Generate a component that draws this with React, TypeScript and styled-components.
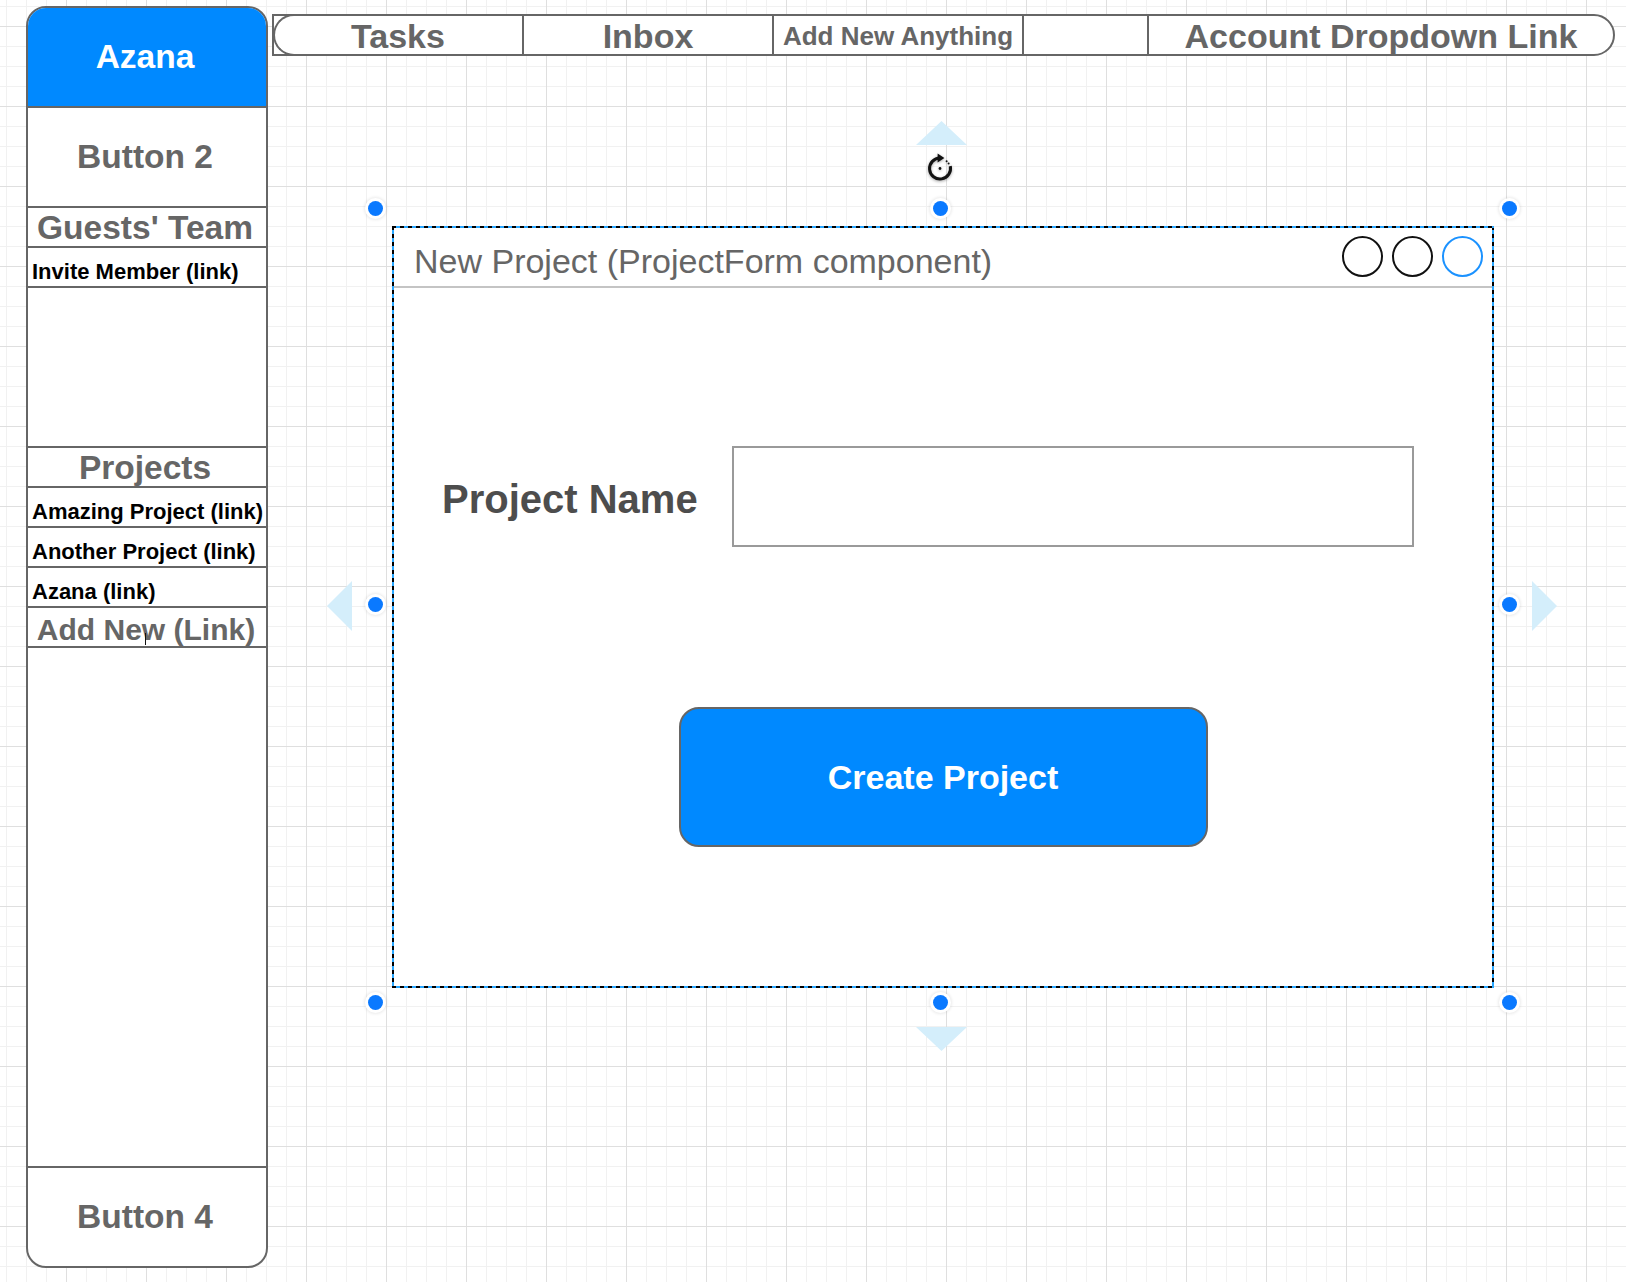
import React from 'react';
import styled, { createGlobalStyle, css } from 'styled-components';

const GlobalStyle = createGlobalStyle`
  html, body {
    margin: 0;
    padding: 0;
  }
  body {
    font-family: "Liberation Sans", Arial, Helvetica, sans-serif;
    background: #fff;
    overflow: hidden;
  }
  *, *::before, *::after {
    box-sizing: border-box;
  }
`;

const Canvas = styled.main`
  width: 1626px;
  height: 1282px;
  display: flex;
  align-items: flex-start;
  padding: 6px 0 0 26px;
  background-color: #fff;
  background-image:
    linear-gradient(to right, #dfdfdf 1px, transparent 1px),
    linear-gradient(to bottom, #dfdfdf 1px, transparent 1px),
    linear-gradient(to right, #f1f1f1 1px, transparent 1px),
    linear-gradient(to bottom, #f1f1f1 1px, transparent 1px);
  background-size: 80px 80px, 80px 80px, 20px 20px, 20px 20px;
  background-position: 66px 26px, 66px 26px, 6px 6px, 6px 6px;
`;

/* ---------- Sidebar ---------- */

const Sidebar = styled.aside`
  flex: 0 0 auto;
  width: 242px;
  height: 1262px;
  border: 2px solid #666;
  border-radius: 20px;
  overflow: hidden;
  background: #fff;
  display: flex;
  flex-direction: column;
`;

const SideCell = styled.div<{ $h: number }>`
  position: relative;
  flex: 0 0 auto;
  height: ${(p) => p.$h}px;
  border-bottom: 2px solid #666;
  white-space: nowrap;
  &:last-child {
    border-bottom: none;
  }
`;

const Brand = styled(SideCell)`
  display: flex;
  align-items: center;
  justify-content: center;
  padding-right: 4px;
  background: #0089ff;
  color: #fff;
  font-weight: 700;
  font-size: 33.5px;
  line-height: 1;
`;

const SideButton = styled(SideCell)`
  display: flex;
  align-items: center;
  justify-content: center;
  padding-right: 4px;
  color: #666;
  font-weight: 700;
  font-size: 33.5px;
  line-height: 1;
`;

const SectionTitle = styled(SideCell)`
  padding: 3px 4px 0 0;
  text-align: center;
  color: #666;
  font-weight: 700;
  font-size: 33.5px;
  line-height: 33.5px;
`;

const SideLink = styled(SideCell)`
  padding: 13px 0 0 4px;
  color: #000;
  font-weight: 700;
  font-size: 22px;
  line-height: 22px;
`;

const AddLink = styled(SideCell)`
  padding: 7px 2px 0 0;
  text-align: center;
  color: #666;
  font-weight: 700;
  font-size: 30px;
  line-height: 30px;
`;

const TextCursor = styled.span`
  position: absolute;
  left: 117px;
  top: 25px;
  width: 1px;
  height: 12px;
  background: #111;
`;

/* ---------- Workspace ---------- */

const Workspace = styled.div`
  display: flex;
  flex-direction: column;
  margin-left: 4px;
  padding-top: 8px;
`;

const NavBar = styled.nav`
  display: grid;
  grid-template-columns: 250px 250px 250px 125px 464px;
  width: 1343px;
  height: 42px;
  border: 2px solid #666;
  border-radius: 0 21px 21px 0;
  background: #fff;
`;

const NavItem = styled.div<{ $size?: number; $cap?: boolean }>`
  position: relative;
  display: flex;
  align-items: center;
  justify-content: center;
  padding-top: 2px;
  border-right: 2px solid #666;
  color: #666;
  font-weight: 700;
  font-size: ${(p) => p.$size ?? 34}px;
  line-height: 1;
  white-space: nowrap;
  &:last-child {
    border-right: none;
  }
  ${(p) =>
    p.$cap &&
    css`
      &::before {
        content: '';
        position: absolute;
        left: -1px;
        top: -2px;
        bottom: -2px;
        width: 42px;
        border: 2px solid #666;
        border-right: none;
        border-radius: 21px 0 0 21px;
      }
    `}
`;

const Stage = styled.div`
  margin: 170px 0 0 120px;
`;

/* ---------- Selected window ---------- */

const dash = (deg: number) =>
  `repeating-linear-gradient(${deg}deg, #000 0 4px, #2aa7ff 4px 8px)`;

const Frame = styled.section`
  position: relative;
  width: 1102px;
  height: 762px;
  background: #fff;
  display: flex;
  flex-direction: column;
  &::after {
    content: '';
    position: absolute;
    inset: 0;
    pointer-events: none;
    background:
      ${dash(90)} top left / 100% 2px no-repeat,
      ${dash(90)} bottom left / 100% 2px no-repeat,
      ${dash(180)} top left / 2px 100% no-repeat,
      ${dash(180)} top right / 2px 100% no-repeat;
  }
`;

const TitleBar = styled.header`
  flex: 0 0 auto;
  height: 62px;
  display: flex;
  align-items: center;
  padding: 0 11px 0 22px;
  border-bottom: 2px solid #c4c4c4;
`;

const Title = styled.h1`
  flex: 1;
  margin: 9px 0 0;
  color: #666;
  font-weight: 400;
  font-size: 34px;
  line-height: 1;
  white-space: nowrap;
`;

const Controls = styled.div`
  display: flex;
  gap: 9px;
  margin-top: 1px;
`;

const ControlDot = styled.span<{ $accent?: boolean }>`
  width: 41px;
  height: 41px;
  border-radius: 50%;
  border: 2px solid ${(p) => (p.$accent ? '#1b92ff' : '#111')};
`;

const Body = styled.div`
  flex: 1;
  display: flex;
  flex-direction: column;
  padding-top: 158px;
`;

const FieldRow = styled.div`
  display: flex;
  align-items: center;
  padding-left: 50px;
`;

const FieldLabel = styled.label`
  width: 290px;
  margin-top: 4px;
  color: #4d4d4d;
  font-weight: 700;
  font-size: 40px;
  line-height: 1;
  white-space: nowrap;
`;

const TextInput = styled.input`
  width: 682px;
  height: 101px;
  border: 2px solid #9a9a9a;
  border-radius: 0;
  background: #fff;
  outline: none;
  padding: 0 16px;
  font-family: inherit;
  font-size: 30px;
`;

const CreateButton = styled.button`
  align-self: center;
  margin-top: 160px;
  width: 529px;
  height: 140px;
  border: 2px solid #666;
  border-radius: 20px;
  background: #0089ff;
  color: #fff;
  font-family: inherit;
  font-weight: 700;
  font-size: 34px;
  line-height: 1;
  cursor: pointer;
`;

/* ---------- Selection overlays ---------- */

type HX = 'l' | 'c' | 'r';
type HY = 't' | 'm' | 'b';

const Handle = styled.span<{ $x: HX; $y: HY }>`
  position: absolute;
  width: 15px;
  height: 15px;
  border-radius: 50%;
  background: #0a79ff;
  box-shadow: 0 0 0 3px #fff, 0 0 3px 4px rgba(0, 0, 0, 0.08);
  ${(p) =>
    p.$x === 'l' ? 'left: -24px;' : p.$x === 'r' ? 'right: -23px;' : 'left: calc(50% - 10px);'}
  ${(p) =>
    p.$y === 't' ? 'top: -25px;' : p.$y === 'b' ? 'bottom: -22px;' : 'top: calc(50% - 10px);'}
`;

type Dir = 'up' | 'down' | 'left' | 'right';

const arrowPlace: Record<Dir, ReturnType<typeof css>> = {
  up: css`
    left: 524px;
    top: -105px;
    width: 51px;
    height: 24px;
    clip-path: polygon(50% 0, 100% 100%, 0 100%);
  `,
  down: css`
    left: 524px;
    top: 801px;
    width: 51px;
    height: 24px;
    clip-path: polygon(0 0, 100% 0, 50% 100%);
  `,
  left: css`
    left: -65px;
    top: 355px;
    width: 25px;
    height: 50px;
    clip-path: polygon(0 50%, 100% 0, 100% 100%);
  `,
  right: css`
    left: 1140px;
    top: 355px;
    width: 25px;
    height: 50px;
    clip-path: polygon(0 0, 100% 50%, 0 100%);
  `,
};

const Arrow = styled.span<{ $dir: Dir }>`
  position: absolute;
  background: #d4eefb;
  ${(p) => arrowPlace[p.$dir]}
`;

const RotateHandle = styled.span`
  position: absolute;
  left: 533px;
  top: -73px;
  width: 30px;
  height: 30px;
  filter: drop-shadow(0 1px 1.5px rgba(0, 0, 0, 0.35));
  svg {
    display: block;
  }
`;

const RotateIcon = () => (
  <svg width="30" height="30" viewBox="0 0 30 30">
    <path
      d="M15 5 A10.5 10.5 0 1 0 25.3 13.2"
      fill="none"
      stroke="#111"
      strokeWidth="3"
    />
    <path d="M12.6 0.6 L19.4 5 L12.6 9.4 Z" fill="#111" />
    <circle cx="15" cy="15.5" r="1.4" fill="#111" />
    <circle cx="21.6" cy="8.2" r="1" fill="#111" />
    <circle cx="23.6" cy="10.6" r="1" fill="#111" />
  </svg>
);

const handles: Array<[HX, HY]> = [
  ['l', 't'],
  ['c', 't'],
  ['r', 't'],
  ['l', 'm'],
  ['r', 'm'],
  ['l', 'b'],
  ['c', 'b'],
  ['r', 'b'],
];

export default function App() {
  return (
    <>
      <GlobalStyle />
      <Canvas>
        <Sidebar>
          <Brand $h={100}>Azana</Brand>
          <SideButton $h={100}>Button 2</SideButton>
          <SectionTitle $h={40}>Guests' Team</SectionTitle>
          <SideLink $h={40}>Invite Member (link)</SideLink>
          <SideCell $h={160} />
          <SectionTitle $h={40}>Projects</SectionTitle>
          <SideLink $h={40}>Amazing Project (link)</SideLink>
          <SideLink $h={40}>Another Project (link)</SideLink>
          <SideLink $h={40}>Azana (link)</SideLink>
          <AddLink $h={40}>
            Add New (Link)
            <TextCursor />
          </AddLink>
          <SideCell $h={520} />
          <SideButton $h={98}>Button 4</SideButton>
        </Sidebar>

        <Workspace>
          <NavBar>
            <NavItem $cap>Tasks</NavItem>
            <NavItem>Inbox</NavItem>
            <NavItem $size={26}>Add New Anything</NavItem>
            <NavItem />
            <NavItem>Account Dropdown Link</NavItem>
          </NavBar>

          <Stage>
            <Frame>
              <TitleBar>
                <Title>New Project (ProjectForm component)</Title>
                <Controls>
                  <ControlDot />
                  <ControlDot />
                  <ControlDot $accent />
                </Controls>
              </TitleBar>
              <Body>
                <FieldRow>
                  <FieldLabel htmlFor="project-name">Project Name</FieldLabel>
                  <TextInput id="project-name" type="text" />
                </FieldRow>
                <CreateButton type="button">Create Project</CreateButton>
              </Body>

              <Arrow $dir="up" />
              <Arrow $dir="down" />
              <Arrow $dir="left" />
              <Arrow $dir="right" />
              <RotateHandle>
                <RotateIcon />
              </RotateHandle>
              {handles.map(([x, y]) => (
                <Handle key={x + y} $x={x} $y={y} />
              ))}
            </Frame>
          </Stage>
        </Workspace>
      </Canvas>
    </>
  );
}
